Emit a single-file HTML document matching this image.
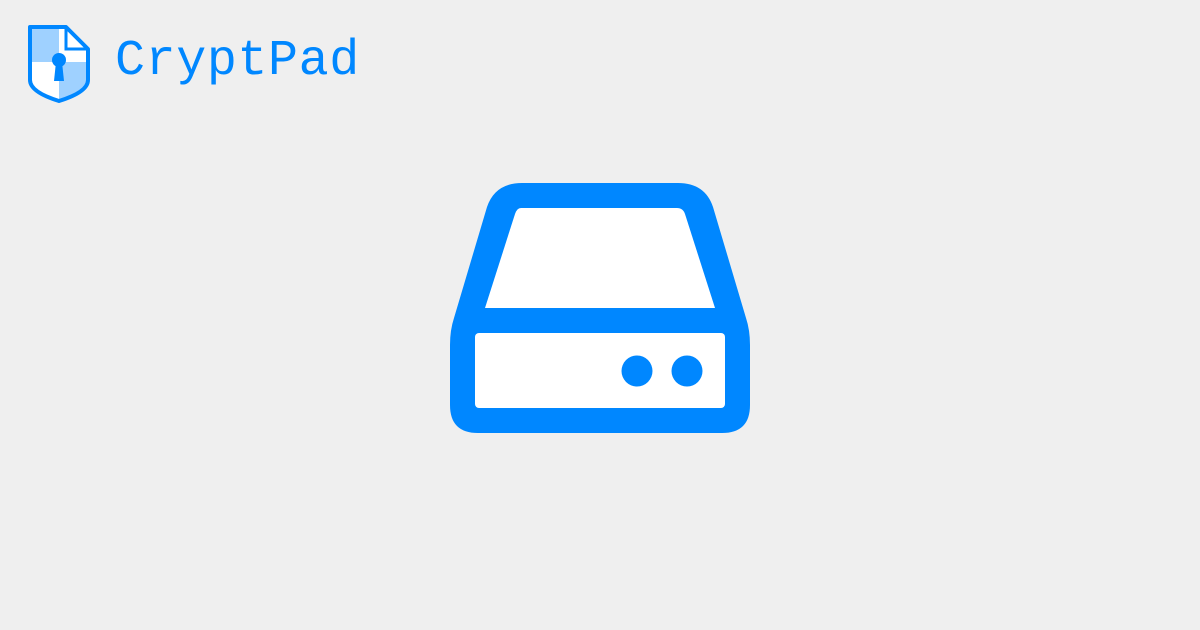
<!DOCTYPE html>
<html><head><style>
html,body{margin:0;padding:0;width:1200px;height:630px;background:#efefef;overflow:hidden}
.t{position:absolute;left:115px;top:33px;font-family:"Liberation Mono",monospace;font-size:50px;letter-spacing:0.6px;color:#0087ff}
</style></head><body>
<svg width="1200" height="630" style="position:absolute;left:0;top:0">
<path d="M30,27 H66 L88,49 V80 Q88,92 59,101 Q30,92 30,80 Z" fill="#fff"/>
<path d="M30,27 H59 V62 H30 Z" fill="#9fd1ff"/>
<path d="M59,62 H88 V80 Q88,92 59,101 Z" fill="#9fd1ff"/>
<path d="M66,27 V49 H88" fill="#fff" stroke="#0087ff" stroke-width="3"/>
<path d="M30,27 H66 L88,49 V80 Q88,92 59,101 Q30,92 30,80 Z" fill="none" stroke="#0087ff" stroke-width="4" stroke-linejoin="round"/>
<circle cx="59" cy="60" r="7" fill="#0087ff"/>
<path d="M56,62 H62 L64,81 H54 Z" fill="#0087ff"/>
<path d="M522,183 H678 Q705,183 713,207 L746,318 Q750,330 750,345 V405 Q750,433 722,433 H478 Q450,433 450,405 V345 Q450,330 454,318 L487,207 Q495,183 522,183Z" fill="#0087ff"/>
<path d="M521,208 H677 Q683,208 685,214 L715,308 H485 L515,214 Q517,208 521,208Z" fill="#fff"/>
<rect x="475" y="333" width="250" height="75" rx="4" fill="#fff"/>
<circle cx="637" cy="371" r="15.5" fill="#0087ff"/>
<circle cx="687" cy="371" r="15.5" fill="#0087ff"/>
</svg>
<div class="t">CryptPad</div>
</body></html>
